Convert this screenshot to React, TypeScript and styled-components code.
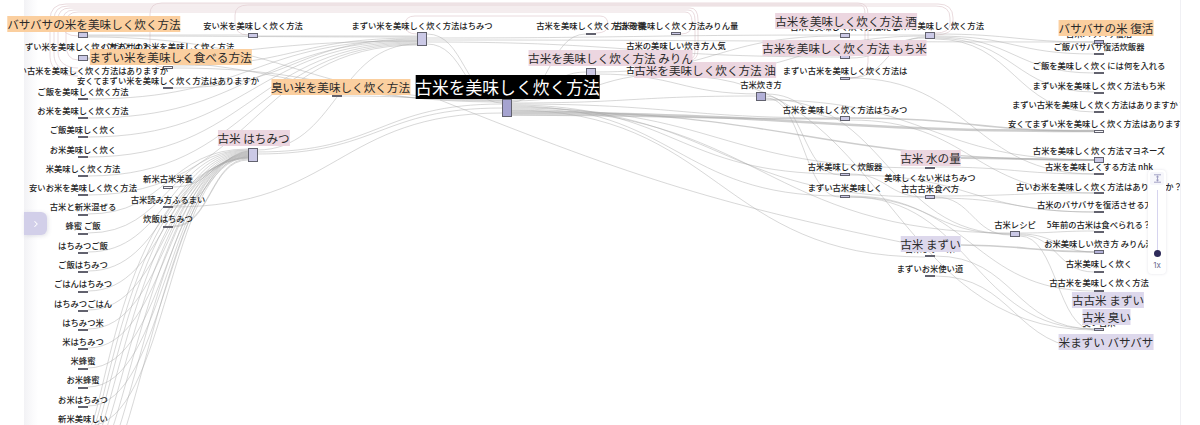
import { createGlobalStyle, styled } from "styled-components";
import { ChevronRight } from "lucide-react";

const GlobalStyle = createGlobalStyle`
    html, body {
        margin: 0;
        padding: 0;
        background: #ffffff;
        font-family: "Noto Sans CJK JP", "Noto Sans", sans-serif;
    }
`;

type TagKind = "orange" | "pink" | "lavender" | "root";
type BarTone = "light" | "mid" | "deep" | "plain";

const tagBackground: Record<TagKind, string> = {
    orange: "#fbcf9f",
    pink: "#ecd6e0",
    lavender: "#ddd8ec",
    root: "#000000",
};

const barBackground: Record<BarTone, string> = {
    light: "#cbc9e6",
    mid: "#b3b1d8",
    deep: "#a5a3d0",
    plain: "#f4f4f8",
};

const Stage = styled.div`
    position: relative;
    display: flex;
    width: 1200px;
    height: 425px;
    overflow: hidden;
    background: #ffffff;
`;

const Gutter = styled.div`
    flex: 0 0 24px;
`;

const Plot = styled.div`
    position: relative;
    flex: 0 0 1156px;
    height: 425px;
    overflow: hidden;
    border-right: 1px solid #f0f0f4;
    background: linear-gradient(90deg, #f2f2f5 0, #fbfbfc 9px, #ffffff 14px);
`;

const Canvas = styled.div`
    position: absolute;
    top: 0;
    left: -24px;
    width: 1200px;
    height: 425px;
`;

const Links = styled.svg`
    position: absolute;
    top: 0;
    left: 0;
    fill: none;
`;

const NodeBar = styled.div<{ $tone: BarTone }>`
    position: absolute;
    width: 10px;
    box-sizing: border-box;
    border: 1px solid #62626e;
    background: ${props => barBackground[props.$tone]};
`;

const SmallLabel = styled.span`
    position: absolute;
    transform: translate(-50%, -50%);
    white-space: nowrap;
    font-size: 8.3px;
    font-weight: 500;
    line-height: 11px;
    color: #222222;
`;

const TagLayer = styled.div`
    position: absolute;
    inset: 0;
`;

const TagLabel = styled.span<{ $kind: TagKind }>`
    position: absolute;
    transform: translateX(-50%);
    white-space: nowrap;
    font-size: ${props => (props.$kind === "root" ? "16.8px" : "11.6px")};
    line-height: ${props => (props.$kind === "root" ? "24px" : "16px")};
    color: ${props => (props.$kind === "root" ? "#ffffff" : "#2a2a2a")};
    background: ${props => tagBackground[props.$kind]};
`;

const SidebarToggle = styled.div`
    position: absolute;
    top: 212px;
    left: 24px;
    display: flex;
    align-items: center;
    justify-content: center;
    width: 23px;
    height: 23px;
    border-radius: 0 6px 6px 0;
    background: #d2cfe9;
    box-shadow: 1px 1px 4px rgba(90, 90, 130, 0.18);
    color: #ffffff;
`;

const ZoomPanel = styled.div`
    position: absolute;
    top: 170px;
    left: 1148px;
    display: flex;
    flex-direction: column;
    align-items: center;
    box-sizing: border-box;
    width: 18px;
    height: 104px;
    padding-top: 2px;
    border-radius: 4px;
    background: #ffffff;
    box-shadow: 0 0 3px rgba(120, 120, 150, 0.22);
`;

const ZoomIcon = styled.div`
    display: flex;
    align-items: center;
    justify-content: center;
    width: 14px;
    height: 13px;
    border-radius: 2px;
    background: #f6f6fb;
    color: #8d8cb8;
`;

const ZoomTrack = styled.div`
    position: relative;
    width: 1px;
    height: 63px;
    margin-top: 5px;
    background: #d6d4ef;
`;

const ZoomThumb = styled.div`
    position: absolute;
    bottom: -4px;
    left: -3px;
    width: 7px;
    height: 7px;
    border-radius: 50%;
    background: #2e2b5a;
`;

const ZoomValue = styled.div`
    margin-top: 7px;
    font-family: "Inter", "Liberation Sans", sans-serif;
    font-size: 8px;
    line-height: 10px;
    color: #6c6c90;
`;

// t: label, x: centre of the column, y: centre of the label, by/bh: the bar
type ChartNode = { t: string; x: number; y: number; by: number; bh: number; tone?: BarTone };

const nodes: ChartNode[] = [
    { t: "まずい米を美味しく炊く方法とは？", x: 83, y: 46, by: 55, bh: 6, tone: "light" },
    { t: "バサバサのお米を美味しく炊く方法", x: 168, y: 46, by: 66, bh: 3, tone: "plain" },
    { t: "まずい古米を美味しく炊く方法はありますか", x: 85, y: 70, by: 76, bh: 0 },
    { t: "安くてまずい米を美味しく炊く方法はありますか", x: 168, y: 80, by: 87, bh: 2 },
    { t: "ご飯を美味しく炊く方法", x: 83, y: 91, by: 98, bh: 2 },
    { t: "お米を美味しく炊く方法", x: 83, y: 110, by: 117, bh: 2 },
    { t: "ご飯美味しく炊く", x: 83, y: 129, by: 136, bh: 2 },
    { t: "お米美味しく炊く", x: 83, y: 149, by: 156, bh: 2 },
    { t: "米美味しく炊く方法", x: 83, y: 168, by: 175, bh: 2 },
    { t: "安いお米を美味しく炊く方法", x: 83, y: 187, by: 194, bh: 2 },
    { t: "古米と新米混ぜる", x: 83, y: 206, by: 214, bh: 2 },
    { t: "蜂蜜 ご飯", x: 83, y: 225, by: 233, bh: 2 },
    { t: "はちみつご飯", x: 83, y: 245, by: 252, bh: 2 },
    { t: "ご飯はちみつ", x: 83, y: 264, by: 271, bh: 2 },
    { t: "ごはんはちみつ", x: 83, y: 283, by: 291, bh: 2 },
    { t: "はちみつごはん", x: 83, y: 303, by: 310, bh: 2 },
    { t: "はちみつ米", x: 83, y: 322, by: 329, bh: 2 },
    { t: "米はちみつ", x: 83, y: 341, by: 348, bh: 2 },
    { t: "米蜂蜜", x: 83, y: 360, by: 368, bh: 2 },
    { t: "お米蜂蜜", x: 83, y: 379, by: 387, bh: 2 },
    { t: "お米はちみつ", x: 83, y: 399, by: 406, bh: 2 },
    { t: "新米美味しい", x: 83, y: 418, by: 425, bh: 2 },
    { t: "新米古米栄養", x: 168, y: 178, by: 186, bh: 3, tone: "plain" },
    { t: "古米読み方ふるまい", x: 168, y: 199, by: 206, bh: 2 },
    { t: "炊飯はちみつ", x: 168, y: 218, by: 226, bh: 2 },
    { t: "安い米を美味しく炊く方法", x: 253, y: 25, by: 33, bh: 5, tone: "light" },
    { t: "まずい米を美味しく炊く方法はちみつ", x: 422, y: 25, by: 32, bh: 14, tone: "light" },
    { t: "古米を美味しく炊く方法 砂糖", x: 591, y: 25, by: 33, bh: 2 },
    { t: "古米を美味しく炊く方法みりん量", x: 676, y: 25, by: 32, bh: 3, tone: "light" },
    { t: "古米の美味しい炊き方人気", x: 676, y: 45, by: 52, bh: 2 },
    { t: "古米を美味しく炊く方法塩", x: 676, y: 69, by: 70, bh: 8, tone: "light" },
    { t: "古米炊き方", x: 761, y: 84, by: 92, bh: 9, tone: "mid" },
    { t: "古米を美味しく炊く方法 だし", x: 845, y: 26, by: 21, bh: 0 },
    { t: "まずい古米を美味しく炊く方法は", x: 845, y: 70, by: 77, bh: 3, tone: "light" },
    { t: "古米を美味しく炊く方法はちみつ", x: 845, y: 109, by: 116, bh: 5, tone: "light" },
    { t: "古米美味しく炊飯器", x: 845, y: 166, by: 173, bh: 3, tone: "light" },
    { t: "まずい古米美味しく", x: 845, y: 187, by: 195, bh: 3, tone: "light" },
    { t: "安い古米を美味しく炊く方法", x: 930, y: 25, by: 32, bh: 7, tone: "light" },
    { t: "美味しくない米はちみつ", x: 930, y: 177, by: 167, bh: 2 },
    { t: "古古古米食べ方", x: 930, y: 188, by: 195, bh: 4, tone: "light" },
    { t: "古米レシピ", x: 1015, y: 224, by: 231, bh: 6, tone: "light" },
    { t: "古米まずい米", x: 930, y: 248, by: 240, bh: 0 },
    { t: "まずいお米使い道", x: 930, y: 268, by: 275, bh: 2 },
    { t: "古米バサバサ復活", x: 1099, y: 33, by: 28, bh: 0 },
    { t: "ご飯バサバサ復活炊飯器", x: 1099, y: 46, by: 53, bh: 2 },
    { t: "ご飯を美味しく炊くには何を入れる", x: 1099, y: 65, by: 72, bh: 2 },
    { t: "まずい米を美味しく炊く方法もち米", x: 1099, y: 85, by: 92, bh: 2 },
    { t: "まずい古米を美味しく炊く方法はありますか？", x: 1099, y: 104, by: 111, bh: 2 },
    { t: "安くてまずい米を美味しく炊く方法はありますか", x: 1099, y: 123, by: 130, bh: 3, tone: "plain" },
    { t: "古米を美味しく炊く方法マヨネーズ", x: 1099, y: 150, by: 157, bh: 6, tone: "light" },
    { t: "古米を美味しくする方法 nhk", x: 1099, y: 166, by: 173, bh: 2 },
    { t: "古いお米を美味しく炊く方法はありますか？", x: 1099, y: 186, by: 192, bh: 2 },
    { t: "古米のバサバサを復活させる方法", x: 1099, y: 204, by: 211, bh: 2 },
    { t: "5年前の古米は食べられる？", x: 1099, y: 224, by: 231, bh: 2 },
    { t: "お米美味しい炊き方 みりん酒", x: 1099, y: 243, by: 250, bh: 4, tone: "mid" },
    { t: "古米美味しく炊く", x: 1099, y: 263, by: 271, bh: 2 },
    { t: "古古米を美味しく炊く方法", x: 1099, y: 282, by: 290, bh: 2 },
    { t: "臭い古米", x: 1099, y: 322, by: 316, bh: 0 },
];

// bars whose label is carried by a coloured tag
const tagBars: { x: number; by: number; bh: number; tone?: BarTone }[] = [
    { x: 83, by: 32, bh: 6, tone: "light" },
    { x: 253, by: 148, bh: 14, tone: "light" },
    { x: 337, by: 95, bh: 2 },
    { x: 507, by: 99, bh: 18, tone: "deep" },
    { x: 591, by: 68, bh: 9, tone: "light" },
    { x: 845, by: 33, bh: 5, tone: "light" },
    { x: 845, by: 55, bh: 4, tone: "light" },
    { x: 1099, by: 40, bh: 4 },
    { x: 930, by: 255, bh: 2 },
    { x: 1099, by: 328, bh: 3, tone: "light" },
    { x: 1099, by: 348, bh: 2 },
];

const tags: { t: string; x: number; y: number; kind: TagKind }[] = [
    { t: "バサバサの米を美味しく炊く方法", x: 94, y: 16, kind: "orange" },
    { t: "まずい米を美味しく食べる方法", x: 170.5, y: 49, kind: "orange" },
    { t: "臭い米を美味しく炊く方法", x: 340.5, y: 79, kind: "orange" },
    { t: "古米 はちみつ", x: 253.5, y: 130, kind: "pink" },
    { t: "古米を美味しく炊く方法 油", x: 705, y: 62, kind: "pink" },
    { t: "古米を美味しく炊く方法 みりん", x: 610.5, y: 49.5, kind: "pink" },
    { t: "古米を美味しく炊く方法 酒", x: 846, y: 13, kind: "pink" },
    { t: "古米を美味しく炊く方法 もち米", x: 844.5, y: 40, kind: "pink" },
    { t: "バサバサの米 復活", x: 1106, y: 20, kind: "orange" },
    { t: "古米 水の量", x: 930.5, y: 150, kind: "pink" },
    { t: "古米 まずい", x: 930.5, y: 236, kind: "lavender" },
    { t: "古古米 まずい", x: 1108, y: 292, kind: "lavender" },
    { t: "古米 臭い", x: 1106.5, y: 309, kind: "lavender" },
    { t: "米まずい バサバサ", x: 1106, y: 334, kind: "lavender" },
    { t: "古米を美味しく炊く方法", x: 507.5, y: 75, kind: "root" },
];

// [x1, y1, x2, y2, width]
type Link = [number, number, number, number, number?];

const fanToHoney: Link[] = [214, 233, 252, 271, 291, 310, 329, 348, 368, 387, 406, 426]
    .map((y, i) => [88, y, 248, 149 + i * 0.8]);

// nodes below the fold climb steeply before they bend over to the honey node
const belowFold = [
    [430, 104, 122, 158],
    [438, 106, 128, 157],
    [446, 108, 134, 156],
    [454, 112, 140, 155],
    [462, 118, 146, 154],
    [472, 124, 152, 153],
    [484, 130, 158, 152],
    [496, 136, 164, 151],
].map(([y, c1, c2, end]) => `M88 ${y}C${c1} ${y - 5} ${c2} ${end + 10} 248 ${end}`);

const grayLinks: Link[] = [
    ...fanToHoney,
    [173, 187, 248, 158],
    [173, 227, 248, 160],
    [173, 226, 248, 159],
    [173, 206, 248, 157],
    [173, 207, 502, 113],
    [88, 35, 248, 35],
    [88, 36, 417, 37],
    [88, 37, 502, 100],
    [88, 58, 417, 41],
    [88, 59, 502, 101],
    [88, 99, 417, 40],
    [88, 118, 417, 41],
    [88, 137, 417, 42],
    [88, 157, 417, 43],
    [88, 176, 417, 44],
    [88, 195, 417, 45],
    [173, 68, 502, 102],
    [173, 66, 417, 38],
    [173, 88, 417, 39],
    [258, 36, 417, 36],
    [257, 150, 417, 44],
    [257, 152, 502, 104],
    [257, 154, 502, 108],
    [342, 96, 502, 100],
    [427, 34, 502, 99],
    [427, 38, 840, 35],
    [427, 40, 1094, 42],
    [427, 42, 840, 57],
    [427, 44, 502, 103],
    [512, 100, 586, 72],
    [512, 101, 671, 74],
    [512, 102, 586, 34],
    [512, 103, 756, 96],
    [512, 104, 840, 118],
    [512, 105, 840, 174],
    [512, 106, 840, 196],
    [512, 107, 925, 197],
    [512, 108, 925, 168],
    [512, 109, 1010, 233],
    [512, 110, 925, 257],
    [512, 111, 1094, 160, 1.4],
    [512, 113, 1094, 131, 2.4],
    [512, 115, 840, 119, 1.6],
    [596, 72, 840, 36],
    [596, 74, 761, 94],
    [681, 74, 925, 36],
    [681, 76, 1094, 330],
    [766, 94, 840, 118],
    [766, 96, 840, 175],
    [766, 98, 840, 197],
    [766, 99, 1010, 234],
    [766, 100, 1094, 160],
    [850, 35, 925, 35],
    [850, 58, 925, 38],
    [850, 78, 925, 37],
    [850, 78, 1094, 174],
    [850, 118, 1094, 131, 1.6],
    [850, 120, 1094, 193],
    [850, 174, 925, 197],
    [850, 175, 1094, 212],
    [850, 196, 1010, 234],
    [850, 197, 1094, 329],
    [850, 197, 1094, 291],
    [935, 34, 1094, 42],
    [935, 36, 1094, 54],
    [935, 37, 1094, 73],
    [935, 38, 1094, 92],
    [935, 39, 1094, 112],
    [961, 158, 1094, 160, 2],
    [935, 167, 1094, 174],
    [935, 196, 1094, 193],
    [935, 197, 1010, 235],
    [935, 198, 1094, 212],
    [1020, 233, 1094, 231],
    [1020, 234, 1094, 252],
    [1020, 235, 1094, 272],
    [1020, 236, 1094, 330],
    [961, 245, 1094, 252, 1.6],
    [935, 256, 1094, 329],
    [935, 276, 1094, 349],
];

const curve = ([x1, y1, x2, y2]: Link) => {
    const mid = (x1 + x2) / 2;
    return `M${x1} ${y1}C${mid} ${y1} ${mid} ${y2} ${x2} ${y2}`;
};

// the long link under the root node does not follow the plain curve
const longLink = "M440 100C640 180 720 205 925 247";

// self-loops running back along the top of the chart
const backLinks = [
    "M78 76C60 76 50 70 50 55L50 20Q50 4 66 4L938 4Q953 4 953 18L953 24Q953 35 935 35",
    "M78 72C62 72 54 66 54 54L54 20Q54 6 68 6L936 6Q950 6 950 18L950 24Q950 33 935 33",
    "M78 68C66 68 58 62 58 52L58 20Q58 8 70 8L690 8Q698 8 698 20L698 50Q698 60 690 60",
    "M78 36Q62 36 62 24Q62 10 74 10L688 10Q695 10 695 20L695 48Q695 58 692 58",
    "M78 60Q66 60 66 44L66 24Q66 12 78 12L685 12Q692 12 692 22L692 24Q692 34 681 34",
    "M163 67Q150 67 150 50L150 14Q150 3 162 3L858 3Q868 3 868 14L868 62Q868 78 850 78",
    "M248 35Q235 35 235 22L235 15Q235 5 248 5L860 5Q865 5 865 14L865 45Q865 56 850 56",
    "M417 34Q405 34 405 25Q405 16 415 16L600 16Q608 16 608 25Q608 33 596 33",
];

export default function App() {
    return (
        <Stage>
            <GlobalStyle />
            <Gutter />
            <Plot>
                <Canvas>
                    <Links width={1200} height={425} viewBox="0 0 1200 425">
                        {backLinks.map((d, i) => (
                            <path key={i} d={d} stroke="#e5d2d5" strokeWidth={0.8} />
                        ))}
                        {grayLinks.map((link, i) => (
                            <path key={i} d={curve(link)} stroke="#a9a9a9" strokeOpacity={0.58} strokeWidth={link[4] ?? 0.8} />
                        ))}
                        {[...belowFold, longLink].map((d, i) => (
                            <path key={i} d={d} stroke="#a9a9a9" strokeOpacity={0.58} strokeWidth={0.8} />
                        ))}
                    </Links>
                    {nodes.filter(n => n.bh > 0).map(n => (
                        <NodeBar
                            key={`${n.t}-${n.x}`}
                            $tone={n.tone ?? "mid"}
                            style={{ left: n.x - 5, top: n.by, height: n.bh }}
                        />
                    ))}
                    {tagBars.map(b => (
                        <NodeBar
                            key={`${b.x}-${b.by}`}
                            $tone={b.tone ?? "mid"}
                            style={{ left: b.x - 5, top: b.by, height: b.bh }}
                        />
                    ))}
                    {nodes.map(n => (
                        <SmallLabel key={`${n.t}-${n.x}`} style={{ left: n.x, top: n.y }}>
                            {n.t}
                        </SmallLabel>
                    ))}
                </Canvas>
            </Plot>
            <TagLayer>
                {tags.map(tag => (
                    <TagLabel key={tag.t} $kind={tag.kind} style={{ left: tag.x, top: tag.y }}>
                        {tag.t}
                    </TagLabel>
                ))}
            </TagLayer>
            <SidebarToggle>
                <ChevronRight size={10} strokeWidth={2.5} />
            </SidebarToggle>
            <ZoomPanel>
                <ZoomIcon>
                    <svg width="9" height="9" viewBox="0 0 9 9" fill="none" stroke="currentColor" strokeWidth="0.8">
                        <path d="M1 0.8H8M1 8.2H8M4.5 2V7M3.2 3.2L4.5 2L5.8 3.2M3.2 5.8L4.5 7L5.8 5.8" />
                    </svg>
                </ZoomIcon>
                <ZoomTrack>
                    <ZoomThumb />
                </ZoomTrack>
                <ZoomValue>1x</ZoomValue>
            </ZoomPanel>
        </Stage>
    );
}
